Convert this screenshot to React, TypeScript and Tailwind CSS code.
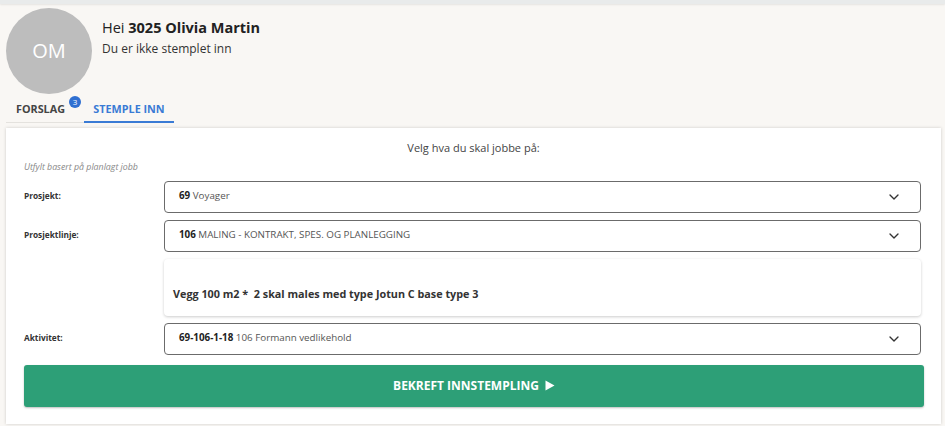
import { ChevronDown } from 'lucide-react';

const font = { fontFamily: '"Open Sans", "Liberation Sans", sans-serif' };

function SelectBox({ code, text }: { code: string; text: string }) {
  return (
    <div className="flex h-[32px] flex-1 items-center justify-between rounded-[4px] border border-[#6b6b6b] bg-white pl-[14px] pr-[18px]">
      <span className="text-[9.8px] text-[#555]">
        <b className="font-bold text-[#222]">{code}</b> {text}
      </span>
      <ChevronDown className="h-[16px] w-[16px] text-[#333]" strokeWidth={2} />
    </div>
  );
}

function Row({ label, children }: { label: string; children: React.ReactNode }) {
  return (
    <div className="flex items-center">
      <div className="w-[140px] shrink-0 text-[8.3px] font-bold text-[#333]">{label}</div>
      {children}
    </div>
  );
}

export default function App() {
  return (
    <div style={font} className="h-[426px] w-[945px] overflow-hidden bg-[#f9f7f4]">
      <div className="h-[4px] bg-[#e9ebeb] shadow-[0_1px_2px_rgba(0,0,0,0.08)]" />
      <div className="flex px-[6px] pt-[4px]">
        <div className="flex h-[86px] w-[86px] items-center justify-center rounded-full bg-[#bdbdbd] text-[20px] text-white">
          OM
        </div>
        <div className="ml-[10px] pt-[10px]">
          <div className="text-[14.5px] leading-[20px] text-[#222]">
            Hei <b className="font-bold">3025 Olivia Martin</b>
          </div>
          <div className="mt-[2px] text-[12px] text-[#333]">Du er ikke stemplet inn</div>
        </div>
      </div>
      <div className="ml-[6px] mt-[3px] flex text-[10.8px] font-bold">
        <div className="relative flex h-[26px] w-[78px] items-center border-b border-[#e4e2de] pl-[10px] text-[#444]">
          FORSLAG
          <span className="absolute left-[63px] top-[-1px] flex h-[12px] w-[12px] items-center justify-center rounded-full bg-[#2f6fd1] text-[8px] font-normal text-white">
            3
          </span>
        </div>
        <div className="flex h-[26px] w-[90px] items-center justify-center border-b-2 border-[#3a7bd5] text-[#3a7bd5]">
          STEMPLE INN
        </div>
      </div>
      <div className="mx-[6px] mt-[5px] h-[296px] w-[935px] bg-white px-[18px] pt-[12px] shadow-[0_0_3px_rgba(0,0,0,0.18)]">
        <div className="text-center text-[11px] text-[#444]">Velg hva du skal jobbe på:</div>
        <div className="mt-[4px] text-[8.8px] italic text-[#888]">Utfylt basert på planlagt jobb</div>
        <div className="mt-[7px] flex w-[897px] flex-col gap-[7px]">
          <Row label="Prosjekt:">
            <SelectBox code="69" text="Voyager" />
          </Row>
          <Row label="Prosjektlinje:">
            <SelectBox code="106" text="MALING - KONTRAKT, SPES. OG PLANLEGGING" />
          </Row>
          <Row label="">
            <div className="flex h-[57px] flex-1 items-center rounded-[4px] bg-white pl-[9px] pt-[14px] shadow-[0_1px_3px_rgba(0,0,0,0.2)]">
              <span className="text-[10.8px] font-bold text-[#333]">Vegg 100 m2 *&nbsp; 2 skal males med type Jotun C base type 3</span>
            </div>
          </Row>
          <Row label="Aktivitet:">
            <SelectBox code="69-106-1-18" text="106 Formann vedlikehold" />
          </Row>
        </div>
        <button className="mt-[10px] flex h-[42px] w-[900px] items-center justify-center gap-[6px] rounded-[3px] bg-[#2d9f77] text-[12px] font-bold text-white shadow-[0_1px_2px_rgba(0,0,0,0.25)]">
          BEKREFT INNSTEMPLING
          <svg width="10" height="11" viewBox="0 0 10 11"><path d="M0.5 0.5 L9.5 5.5 L0.5 10.5 Z" fill="white" /></svg>
        </button>
      </div>
    </div>
  );
}
